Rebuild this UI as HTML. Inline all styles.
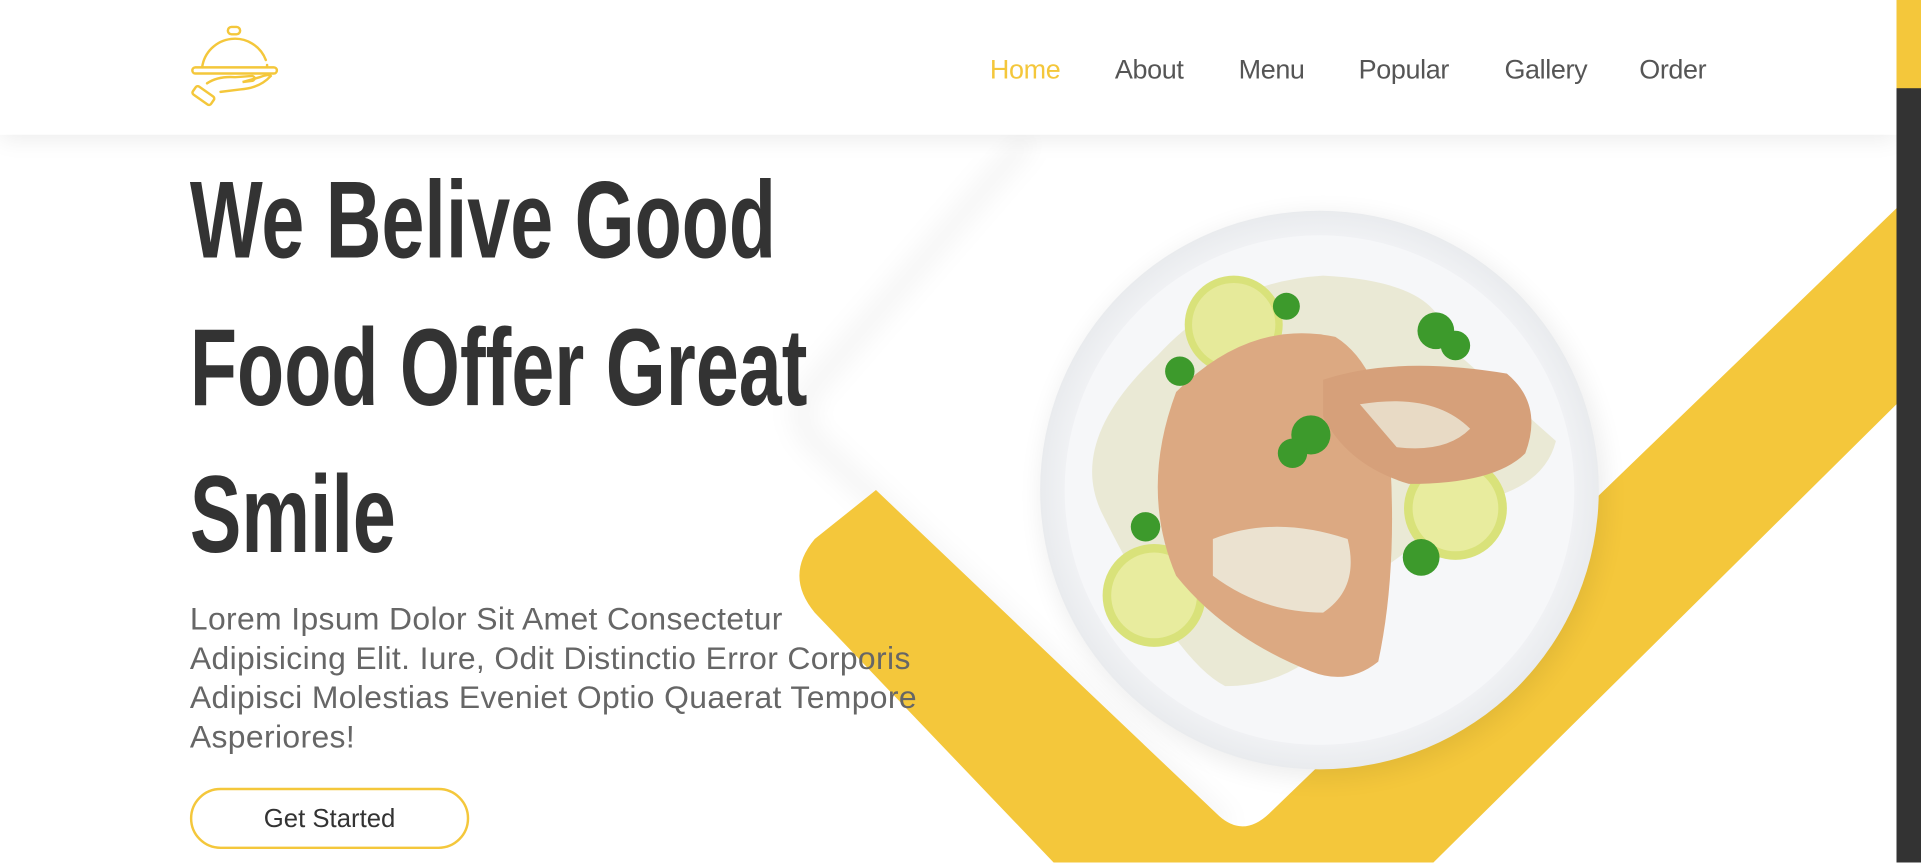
<!DOCTYPE html>
<html><head><meta charset="utf-8"><style>
html,body{margin:0;padding:0;width:1921px;height:862px;overflow:hidden;background:#fff}
#w{position:absolute;left:0;top:0;width:1568px;height:704px;transform:scale(1.22513);transform-origin:0 0;overflow:hidden;font-family:"Liberation Sans",sans-serif}
.hdr{position:absolute;left:0;top:0;width:1548px;height:110px;background:#fff;box-shadow:0 4px 18px rgba(0,0,0,.08);z-index:5}
.nav a{position:absolute;top:44px;font-size:22px;color:#555;text-decoration:none;letter-spacing:-0.3px}
.sb{position:absolute;left:1548px;top:0;width:20px;height:704px;background:#333;z-index:6}
.sb i{position:absolute;left:0;top:0;width:20px;height:72px;background:#f4c73b}
.h{position:absolute;left:155px;font-family:"Liberation Sans Narrow","Liberation Sans",sans-serif;font-weight:bold;font-size:63px;color:#333;white-space:nowrap;transform:scale(1,1.42);transform-origin:0 100%;line-height:63px;z-index:3}
.p{position:absolute;left:155px;top:489px;font-size:26px;line-height:32px;color:#666;white-space:nowrap;letter-spacing:0.3px;z-index:3}
.btn{position:absolute;left:155px;top:643px;width:224px;height:46px;border:2px solid #f4c73b;border-radius:25px;font-size:21px;color:#333;text-align:center;line-height:48px;z-index:3}
</style></head><body><div id="w">
<svg style="position:absolute;left:0;top:0" width="1568" height="704" viewBox="0 0 1568 704">
<defs>
<filter id="bl" x="-20%" y="-20%" width="140%" height="140%"><feGaussianBlur stdDeviation="10"/></filter>
<radialGradient id="pl" cx="50%" cy="50%" r="50%"><stop offset="0.85" stop-color="#f5f6f8"/><stop offset="1" stop-color="#e9ebee"/></radialGradient>
</defs>
<path d="M840 112 L660 320 Q648 340 662 358 L1000 675" fill="none" stroke="#000" stroke-opacity="0.05" stroke-width="14" filter="url(#bl)"/>
<path d="M715 400 L995 666 Q1015 684 1036 664 L1548 170 L1548 330 L1170 704 L860 704 L665 500 Q640 470 665 440 Z" fill="#f4c73b"/>
<circle cx="1080" cy="405" r="230" fill="#000" opacity="0.07" filter="url(#bl)"/>
<circle cx="1077" cy="400" r="228" fill="url(#pl)"/>
<circle cx="1077" cy="400" r="208" fill="#f6f7f9"/>
<g>
<path d="M945 290 Q1000 230 1080 225 Q1180 230 1180 280 L1270 360 Q1260 400 1200 410 Q1150 450 1120 470 Q1080 560 1000 560 Q960 540 900 420 Q870 360 945 290Z" fill="#e7e6cf" opacity="0.85"/>
<circle cx="1007" cy="265" r="40" fill="#d9e27a"/><circle cx="1007" cy="265" r="34" fill="#e6ea9a"/>
<circle cx="942" cy="486" r="42" fill="#d9e27a"/><circle cx="942" cy="486" r="35" fill="#e8ec9e"/>
<circle cx="1188" cy="415" r="42" fill="#d9e27a"/><circle cx="1188" cy="415" r="35" fill="#e8ec9e"/>
<path d="M960 320 Q1020 260 1090 275 Q1130 300 1135 380 Q1140 470 1125 540 Q1100 560 1070 548 Q1000 520 960 470 Q930 400 960 320Z" fill="#dca982"/>
<path d="M1080 310 Q1140 290 1230 305 Q1260 330 1245 370 Q1220 395 1150 395 Q1100 380 1080 340Z" fill="#d6a07a"/>
<path d="M990 440 Q1040 420 1100 440 Q1110 480 1080 500 Q1030 500 990 470Z" fill="#ece8d8" opacity="0.9"/>
<path d="M1110 330 Q1170 320 1200 350 Q1180 370 1140 365Z" fill="#ece8d8" opacity="0.8"/>
<g fill="#3d9a2c"><circle cx="1070" cy="355" r="16"/><circle cx="1055" cy="370" r="12"/><circle cx="1172" cy="270" r="15"/><circle cx="1188" cy="282" r="12"/><circle cx="1050" cy="250" r="11"/><circle cx="963" cy="303" r="12"/><circle cx="935" cy="430" r="12"/><circle cx="1160" cy="455" r="15"/></g>
</g>
</svg>
<div class="hdr">
<svg style="position:absolute;left:150px;top:16px" width="84" height="76" viewBox="150 16 84 76" fill="none" stroke="#f4c73b" stroke-width="2" stroke-linecap="round">
<rect x="186" y="22" width="10" height="6" rx="3"/>
<path d="M165 55 A27 27 0 0 1 217 49"/><path d="M218 53 L218 55"/>
<rect x="157" y="55" width="69" height="5" rx="2.5"/>
<path d="M169 68 Q178 62 192 63 L206 62 Q210 64 206 66 L198 67 L212 63 Q220 60 221 62 Q212 72 196 73 L180 75"/>
<rect x="162" y="69" width="8" height="18" rx="2" transform="rotate(-55 166 78)"/>
</svg>
<div class="nav">
<a style="left:808px;color:#f4c73b">Home</a>
<a style="left:910px">About</a>
<a style="left:1011px">Menu</a>
<a style="left:1109px">Popular</a>
<a style="left:1228px">Gallery</a>
<a style="left:1338px">Order</a>
</div>
</div>
<div class="sb"><i></i></div>
<div class="h" style="top:163px">We Belive Good</div>
<div class="h" style="top:283px">Food Offer Great</div>
<div class="h" style="top:403px">Smile</div>
<div class="p">Lorem Ipsum Dolor Sit Amet Consectetur<br>Adipisicing Elit. Iure, Odit Distinctio Error Corporis<br>Adipisci Molestias Eveniet Optio Quaerat Tempore<br>Asperiores!</div>
<div class="btn">Get Started</div>
</div></body></html>
